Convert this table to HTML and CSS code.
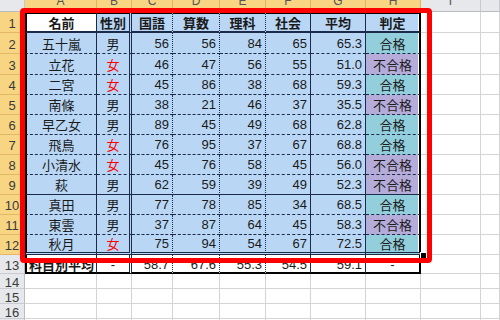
FILE: index.html
```html
<!DOCTYPE html>
<html lang="ja">
<head>
<meta charset="utf-8">
<link rel="stylesheet" href="styles.css">
</head>
<body>
<div class="sheet">
  <div class="row h12 colh">
    <div class="c gh"></div>
    <div class="c oh"><span class="lt">A</span></div>
    <div class="c oh"><span class="lt">B</span></div>
    <div class="c oh"><span class="lt">C</span></div>
    <div class="c oh"><span class="lt">D</span></div>
    <div class="c oh"><span class="lt">E</span></div>
    <div class="c oh"><span class="lt">F</span></div>
    <div class="c oh"><span class="lt">G</span></div>
    <div class="c oh"><span class="lt">H</span></div>
    <div class="c gh"><span class="lt">I</span></div>
    <div class="c gh"></div>
  </div>

  <div class="row h21 hd">
    <div class="c rs">1</div>
    <div class="c t ca w">名前</div><div class="c t cb">性別</div><div class="c t cc">国語</div><div class="c t cd">算数</div><div class="c t ce">理科</div><div class="c t cf">社会</div><div class="c t cg">平均</div><div class="c t ch">判定</div>
    <div class="c"></div><div class="c"></div>
  </div>
  <div class="row h21">
    <div class="c rs">2</div>
    <div class="c t ca">五十嵐</div><div class="c t cb">男</div><div class="c t cc">56</div><div class="c t cd">56</div><div class="c t ce">84</div><div class="c t cf">65</div><div class="c t cg">65.3</div><div class="c t ch ok">合格</div>
    <div class="c"></div><div class="c"></div>
  </div>
  <div class="row h21">
    <div class="c rs">3</div>
    <div class="c t ca">立花</div><div class="c t cb f">女</div><div class="c t cc">46</div><div class="c t cd">47</div><div class="c t ce">56</div><div class="c t cf">55</div><div class="c t cg">51.0</div><div class="c t ch ng">不合格</div>
    <div class="c"></div><div class="c"></div>
  </div>
  <div class="row h20">
    <div class="c rs">4</div>
    <div class="c t ca">二宮</div><div class="c t cb f">女</div><div class="c t cc">45</div><div class="c t cd">86</div><div class="c t ce">38</div><div class="c t cf">68</div><div class="c t cg">59.3</div><div class="c t ch ok">合格</div>
    <div class="c"></div><div class="c"></div>
  </div>
  <div class="row h20">
    <div class="c rs">5</div>
    <div class="c t ca">南條</div><div class="c t cb">男</div><div class="c t cc">38</div><div class="c t cd">21</div><div class="c t ce">46</div><div class="c t cf">37</div><div class="c t cg">35.5</div><div class="c t ch ng">不合格</div>
    <div class="c"></div><div class="c"></div>
  </div>
  <div class="row h20">
    <div class="c rs">6</div>
    <div class="c t ca">早乙女</div><div class="c t cb">男</div><div class="c t cc">89</div><div class="c t cd">45</div><div class="c t ce">49</div><div class="c t cf">68</div><div class="c t cg">62.8</div><div class="c t ch ok">合格</div>
    <div class="c"></div><div class="c"></div>
  </div>
  <div class="row h20">
    <div class="c rs">7</div>
    <div class="c t ca">飛鳥</div><div class="c t cb f">女</div><div class="c t cc">76</div><div class="c t cd">95</div><div class="c t ce">37</div><div class="c t cf">67</div><div class="c t cg">68.8</div><div class="c t ch ok">合格</div>
    <div class="c"></div><div class="c"></div>
  </div>
  <div class="row h20">
    <div class="c rs">8</div>
    <div class="c t ca">小清水</div><div class="c t cb f">女</div><div class="c t cc">45</div><div class="c t cd">76</div><div class="c t ce">58</div><div class="c t cf">45</div><div class="c t cg">56.0</div><div class="c t ch ng">不合格</div>
    <div class="c"></div><div class="c"></div>
  </div>
  <div class="row h20 solid">
    <div class="c rs">9</div>
    <div class="c t ca">萩</div><div class="c t cb">男</div><div class="c t cc">62</div><div class="c t cd">59</div><div class="c t ce">39</div><div class="c t cf">49</div><div class="c t cg">52.3</div><div class="c t ch ng">不合格</div>
    <div class="c"></div><div class="c"></div>
  </div>
  <div class="row h20">
    <div class="c rs">10</div>
    <div class="c t ca">真田</div><div class="c t cb">男</div><div class="c t cc">77</div><div class="c t cd">78</div><div class="c t ce">85</div><div class="c t cf">34</div><div class="c t cg">68.5</div><div class="c t ch ok">合格</div>
    <div class="c"></div><div class="c"></div>
  </div>
  <div class="row h20">
    <div class="c rs">11</div>
    <div class="c t ca">東雲</div><div class="c t cb">男</div><div class="c t cc">37</div><div class="c t cd">87</div><div class="c t ce">64</div><div class="c t cf">45</div><div class="c t cg">58.3</div><div class="c t ch ng">不合格</div>
    <div class="c"></div><div class="c"></div>
  </div>
  <div class="row h20 dbl">
    <div class="c rs">12</div>
    <div class="c t ca">秋月</div><div class="c t cb f">女</div><div class="c t cc">75</div><div class="c t cd">94</div><div class="c t ce">54</div><div class="c t cf">67</div><div class="c t cg">72.5</div><div class="c t ch ok">合格</div>
    <div class="c"></div><div class="c"></div>
  </div>
  <div class="row h19 tot">
    <div class="c rg">13</div>
    <div class="c t ca b">科目別平均</div><div class="c t cb">-</div><div class="c t cc">58.7</div><div class="c t cd">67.6</div><div class="c t ce">55.3</div><div class="c t cf">54.5</div><div class="c t cg">59.1</div><div class="c t ch">-</div>
    <div class="c"></div><div class="c"></div>
  </div>
  <div class="row h15">
    <div class="c rg">14</div>
    <div class="c"></div><div class="c"></div><div class="c"></div><div class="c"></div><div class="c"></div><div class="c"></div><div class="c"></div><div class="c"></div><div class="c"></div><div class="c"></div>
  </div>
  <div class="row h15">
    <div class="c rg">15</div>
    <div class="c"></div><div class="c"></div><div class="c"></div><div class="c"></div><div class="c"></div><div class="c"></div><div class="c"></div><div class="c"></div><div class="c"></div><div class="c"></div>
  </div>
  <div class="row h15">
    <div class="c rg">16</div>
    <div class="c"></div><div class="c"></div><div class="c"></div><div class="c"></div><div class="c"></div><div class="c"></div><div class="c"></div><div class="c"></div><div class="c"></div><div class="c"></div>
  </div>
  <div class="row h15">
    <div class="c rg">17</div>
    <div class="c"></div><div class="c"></div><div class="c"></div><div class="c"></div><div class="c"></div><div class="c"></div><div class="c"></div><div class="c"></div><div class="c"></div><div class="c"></div>
  </div>

  <div class="handle"></div>
  <div class="frame"></div>
</div>
</body>
</html>
```

FILE: styles.css
```css
* { box-sizing: border-box; }
html, body { margin: 0; padding: 0; background: #fff; }
body { width: 500px; height: 320px; overflow: hidden; }

.sheet {
  position: relative;
  width: 500px;
  height: 320px;
  overflow: hidden;
  font-family: "Liberation Sans", "Noto Sans CJK JP", sans-serif;
  font-size: 13px;
  color: #1a1a1a;
}

.row {
  display: grid;
  grid-template-columns: 25px 72px 35px 41px 47px 46px 45px 55px 55px 60px 1fr;
}
.h12 { height: 12px; }
.h21 { height: 21px; }
.h20 { height: 20px; }
.h19 { height: 19px; }
.h15 { height: 15px; }

.c {
  display: flex;
  align-items: center;
  justify-content: center;
  overflow: hidden;
  white-space: nowrap;
  border-right: 1px solid #d4d4d4;
  border-bottom: 1px solid #d4d4d4;
}

/* column header row */
.colh .c { align-items: flex-start; color: #555; font-size: 12px; }
.lt { display: block; margin-top: -6px; line-height: 15px; }
.oh {
  background: #f8d583;
  border-right: 1px solid #e2b45e;
  border-bottom: 1px solid #e2a544;
}
.gh {
  background: #e6e8eb;
  border-right: 1px solid #c6c9cd;
  border-bottom: 1px solid #b9bdc2;
}

/* row headers */
.rs, .rg { font-size: 13px; color: #3a3a3a; padding-top: 2px; }
.rs {
  background: #f8d583;
  border-right: 1px solid #e2a544;
  border-bottom: 1px solid #e3b864;
}
.rg {
  background: #e6e8eb;
  border-right: 1px solid #b9bdc2;
  border-bottom: 1px solid #c8cbcf;
}

/* table cells */
.t {
  background: #b9d7f5;
  border-bottom: 1px dashed #1c2b4a;
}
.t.ca { border-left: 2px solid #000; border-right: 1px solid #1c2b4a; }
.t.cb { border-right: 3px double #1c2b4a; }
.t.cc, .t.cd, .t.ce { border-right: 1px dotted #1c2b4a; justify-content: flex-end; padding-right: 3px; }
.t.cf, .t.cg { border-right: 1px solid #1c2b4a; justify-content: flex-end; padding-right: 3px; }
.t.ch { border-right: 2px solid #000; box-shadow: inset -1px 0 0 #fff; }

.t.w { background: #fff; }
.t.ok { background: #93cedc; }
.t.ng { background: #b6acd9; }
.t.f { color: #ff0000; }

.hd .t {
  border-top: 2px solid #000;
  border-bottom: 2px solid #1c2b4a;
  font-weight: bold;
  justify-content: center;
  padding-right: 0;
}
.solid .t { border-bottom: 1px solid #1c2b4a; }
.dbl .t { border-bottom: 3px double #1c2b4a; }
.tot .t { background: #fff; border-bottom: 2px solid #000; padding-top: 1px; }
.b { font-weight: bold; }

/* overlays */
.handle {
  position: absolute;
  left: 420px;
  top: 252px;
  width: 7px;
  height: 7px;
  background: #000;
  border: 1px solid #fff;
}
.frame {
  position: absolute;
  left: 20px;
  top: 8px;
  width: 412px;
  height: 255px;
  border: 5px solid #ff0000;
  border-radius: 4px;
  pointer-events: none;
}
```
